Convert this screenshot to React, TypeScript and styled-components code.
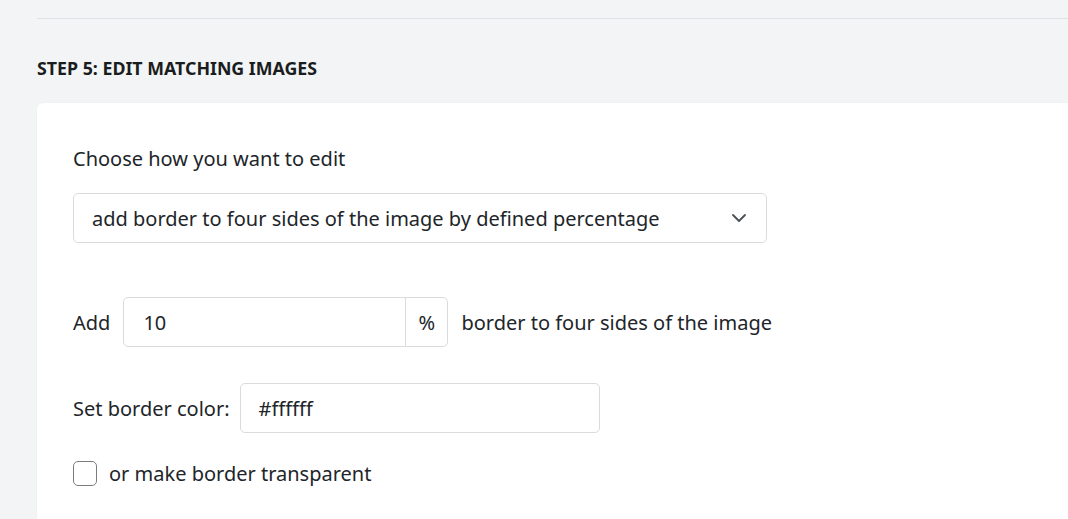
import React from "react";
import styled, { createGlobalStyle } from "styled-components";

const Global = createGlobalStyle`
  html, body {
    margin: 0;
    padding: 0;
    background: #f3f4f6;
    font-family: "Noto Sans", "Open Sans", sans-serif;
    color: #212529;
  }
  * { box-sizing: border-box; }
`;

const Page = styled.div`
  padding: 18px 0 0 37px;
  height: 519px;
  overflow: hidden;
`;

const Divider = styled.hr`
  margin: 0;
  border: 0;
  border-top: 1px solid #dfe1e4;
`;

const Heading = styled.h2`
  margin: 37px 0 0;
  font-size: 17.8px;
  font-weight: 700;
  line-height: 24px;
  text-transform: uppercase;
  color: #1a1d20;
`;

const Card = styled.section`
  margin-top: 23px;
  background: #ffffff;
  border-radius: 6px 0 0 0;
  box-shadow: 0 0 2px rgba(0, 0, 0, 0.06);
  padding: 42px 0 60px 36px;
  display: flex;
  flex-direction: column;
`;

const Label = styled.div`
  font-size: 20px;
  line-height: 28px;
`;

const SelectBox = styled.div`
  margin-top: 20px;
  width: 694px;
  height: 50px;
  border: 1px solid #d9dcdf;
  border-radius: 5px;
  display: flex;
  align-items: center;
  justify-content: space-between;
  padding: 0 19px 0 18px;
  font-size: 20px;
`;

const Row = styled.div<{ $top: number; $gap: number }>`
  margin-top: ${(p) => p.$top}px;
  display: flex;
  align-items: center;
  gap: ${(p) => p.$gap}px;
  font-size: 20px;
`;

const InputGroup = styled.div`
  display: flex;
  height: 50px;
  border: 1px solid #d9dcdf;
  border-radius: 5px;
`;

const Field = styled.div<{ $width: number }>`
  width: ${(p) => p.$width}px;
  height: 100%;
  display: flex;
  align-items: center;
  padding-left: 19px;
  font-size: 20px;
`;

const Addon = styled.div`
  width: 42px;
  height: 100%;
  border-left: 1px solid #d9dcdf;
  display: flex;
  align-items: center;
  justify-content: center;
  font-size: 20px;
`;

const TextBox = styled.div`
  width: 360px;
  height: 50px;
  border: 1px solid #d9dcdf;
  border-radius: 5px;
  display: flex;
  align-items: center;
  padding-left: 18px;
  font-size: 20px;
`;

const Check = styled.span`
  width: 24px;
  height: 25px;
  border: 1.5px solid #7a7d80;
  border-radius: 5px;
  background: #fff;
`;

const Chevron = () => (
  <svg width="16" height="10" viewBox="0 0 16 10" fill="none">
    <path d="M2 2l6 6 6-6" stroke="#4a4f55" strokeWidth="1.8" strokeLinecap="round" strokeLinejoin="round" />
  </svg>
);

export default function App() {
  return (
    <>
      <Global />
      <Page>
        <Divider />
        <Heading>Step 5: Edit matching images</Heading>
        <Card>
          <Label>Choose how you want to edit</Label>
          <SelectBox>
            <span>add border to four sides of the image by defined percentage</span>
            <Chevron />
          </SelectBox>
          <Row $top={54} $gap={13}>
            <span>Add</span>
            <InputGroup>
              <Field $width={281}>10</Field>
              <Addon>%</Addon>
            </InputGroup>
            <span>border to four sides of the image</span>
          </Row>
          <Row $top={36} $gap={10}>
            <span>Set border color:</span>
            <TextBox>#ffffff</TextBox>
          </Row>
          <Row $top={27} $gap={12}>
            <Check />
            <span>or make border transparent</span>
          </Row>
        </Card>
      </Page>
    </>
  );
}
